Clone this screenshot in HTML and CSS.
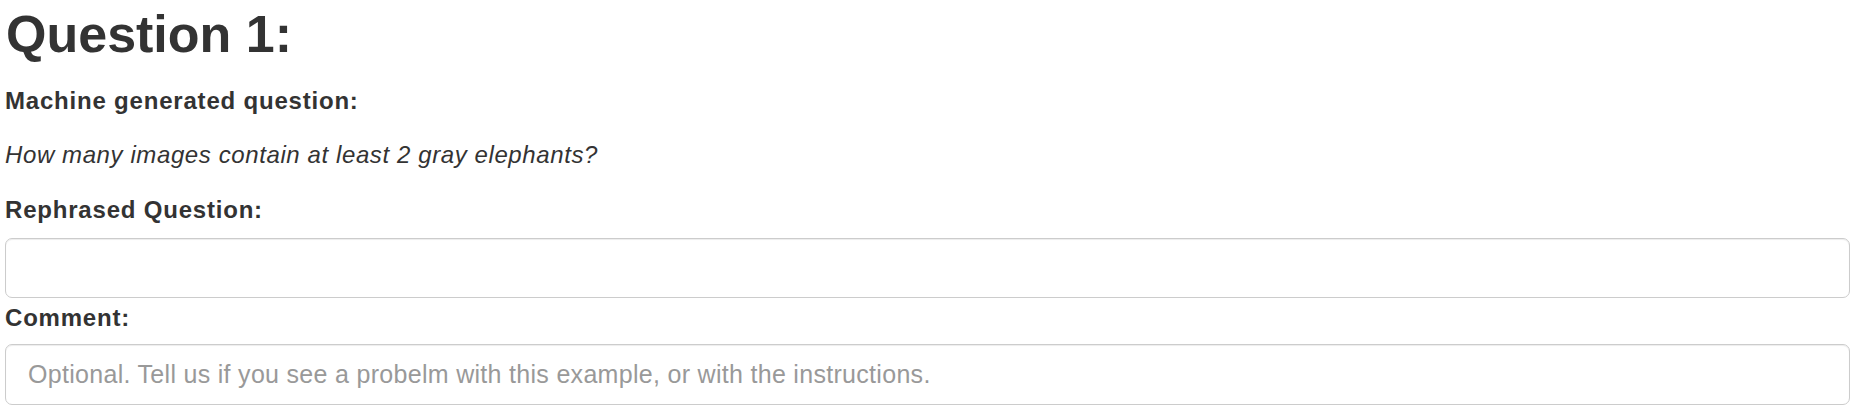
FILE: index.html
```html
<!DOCTYPE html>
<html lang="en">
<head>
    <meta charset="UTF-8">
    <meta name="viewport" content="width=device-width, initial-scale=1">
    <title>Question 1</title>
    <link rel="stylesheet" href="styles.css">
</head>
<body>
    <div class="question">
        <h1>Question 1:</h1>

        <!-- Question shown to the worker -->
        <p class="field-label first">Machine generated question:</p>
        <p class="machine-question">How many images contain at least 2 gray elephants?</p>

        <label for="rephrased" class="field-label rephrase">Rephrased Question:</label>
        <input type="text" id="rephrased" name="rephrased" class="text-box">

        <label for="comment" class="field-label comment">Comment:</label>
        <input type="text" id="comment" name="comment" class="text-box comment-box"
               placeholder="Optional. Tell us if you see a probelm with this example, or with the instructions.">
    </div>
</body>
</html>
```

FILE: styles.css
```css
body {
    font-family: "Liberation Sans", Arial, sans-serif;
    background-color: #fff;
    color: #333; /* Dark grey text */
    margin: 0;
    padding: 0;
}
.question {
    padding: 4px 6px 0 5px;
}
h1 {
    font-size: 52px;
    font-weight: bold;
    line-height: 60px;
    margin: 0;
    padding-left: 1px;
}
.field-label {
    display: block;
    font-size: 24px;
    font-weight: bold;
    letter-spacing: 0.8px;
    line-height: 32px;
    margin: 0;
}
.field-label.first {
    margin-top: 21px;
}
.machine-question {
    font-size: 24px;
    font-style: italic;
    letter-spacing: 0.6px;
    line-height: 32px;
    margin: 22px 0 0;
}
.field-label.rephrase {
    margin-top: 23px;
}
.field-label.comment {
    margin-top: 4px;
}
.text-box {
    display: block;
    box-sizing: border-box;
    width: 100%;
    height: 60px;
    margin: 12px 0 0;
    padding: 0 22px;
    font-family: inherit;
    font-size: 25px;
    letter-spacing: 0.3px;
    color: #555;
    background-color: #fff;
    border: 1px solid #ccc;
    border-radius: 7px;
    box-shadow: inset 0 1px 1px rgba(0, 0, 0, .075);
    outline: none;
}
.text-box::placeholder {
    color: #999;
}
.comment-box {
    height: 61px;
    margin-top: 10px;
}
```
